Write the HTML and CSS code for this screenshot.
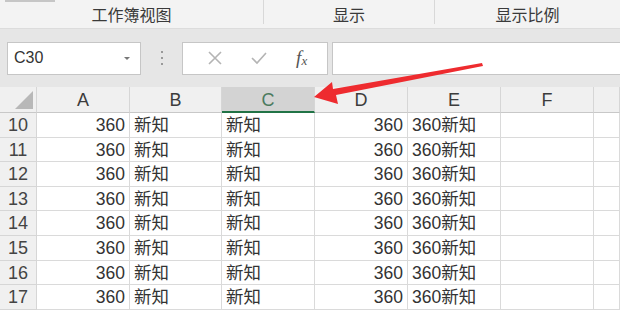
FILE: index.html
```html
<!DOCTYPE html>
<html lang="zh-CN">
<head>
  <meta charset="UTF-8">
  <title>Excel</title>
  <link rel="stylesheet" href="styles.css">
</head>
<body>
  <div class="ribbon">
    <div class="group group-view"><span class="stub"></span>工作簿视图</div>
    <div class="group group-show">显示</div>
    <div class="group group-zoom">显示比例</div>
  </div>

  <div class="formula-bar">
    <div class="name-box">
      <span>C30</span>
      <svg class="caret" width="8" height="5" viewBox="0 0 8 5"><path d="M1 1 L4 4 L7 1 Z" fill="#777"/></svg>
    </div>
    <div class="dots"><i></i><i></i><i></i></div>
    <div class="fx-buttons">
      <svg width="16" height="16" viewBox="0 0 16 16"><path d="M2 2 L14 14 M14 2 L2 14" stroke="#b4b4b4" stroke-width="1.6"/></svg>
      <svg width="18" height="16" viewBox="0 0 18 16"><path d="M2 8 L7 13 L16 3" stroke="#b4b4b4" stroke-width="1.6" fill="none"/></svg>
      <span class="fx">f<sub>x</sub></span>
    </div>
    <div class="formula-input"></div>
  </div>

  <div class="sheet" id="sheet">
    <div class="corner"><svg width="20" height="20" viewBox="0 0 20 20"><path d="M19 1 L19 19 L1 19 Z" fill="#b8b8b8"/></svg></div>
    <div class="col-head">A</div>
    <div class="col-head">B</div>
    <div class="col-head active">C</div>
    <div class="col-head">D</div>
    <div class="col-head">E</div>
    <div class="col-head">F</div>
    <div class="col-head"></div>
  </div>

  <svg class="arrow" width="620" height="313" viewBox="0 0 620 313">
    <path d="M314 97 L332 82 L333 89 L482 63 L483 66 L336 95 L338 104 Z" fill="#ee2b2f"/>
  </svg>

  <script>
    const sheet = document.getElementById('sheet')
    for (let r = 10; r <= 17; r++) {
      const cells = [
        ['row-head', r],
        ['cell num', '360'],
        ['cell', '新知'],
        ['cell', '新知'],
        ['cell num', '360'],
        ['cell', '360新知'],
        ['cell', ''],
        ['cell', '']
      ]
      cells.forEach(([cls, text]) => {
        const div = document.createElement('div')
        div.className = cls
        div.textContent = text
        sheet.appendChild(div)
      })
    }
  </script>
</body>
</html>
```

FILE: styles.css
```css
* {
  box-sizing: border-box;
}
body {
  margin: 0;
  width: 620px;
  height: 313px;
  overflow: hidden;
  font-family: 'Liberation Sans', 'Noto Sans CJK SC', sans-serif;
  color: #444;
  background: #fff;
  position: relative;
}
.ribbon {
  display: flex;
  height: 29px;
  background: #f3f3f3;
  border-bottom: 1px solid #dcdcdc;
}
.group {
  position: relative;
  font-size: 16px;
  line-height: 18px;
  text-align: center;
  padding-top: 7px;
  color: #3a3a3a;
}
.group-view {
  width: 264px;
  border-right: 1px solid #d8d8d8;
  margin-bottom: 4px;
}
.group-show {
  width: 171px;
  border-right: 1px solid #d8d8d8;
  margin-bottom: 4px;
}
.group-zoom {
  flex: 1;
}
.stub {
  position: absolute;
  left: 5px;
  top: 0;
  width: 50px;
  height: 2px;
  background: #c6c6c6;
}
.formula-bar {
  display: flex;
  align-items: center;
  height: 58px;
  padding: 0 0 0 7px;
  background: #e6e6e6;
}
.name-box {
  width: 134px;
  height: 33px;
  background: #fff;
  border: 1px solid #c6c6c6;
  display: flex;
  align-items: center;
  justify-content: space-between;
  padding: 0 9px 0 6px;
  font-size: 16px;
  color: #333;
}
.dots {
  width: 41px;
  display: flex;
  flex-direction: column;
  align-items: center;
  gap: 4px;
}
.dots i {
  width: 2px;
  height: 2px;
  background: #999;
}
.fx-buttons {
  width: 146px;
  height: 33px;
  background: #fff;
  border: 1px solid #c6c6c6;
  display: flex;
  align-items: center;
  justify-content: space-around;
  padding: 0 6px 0 10px;
}
.fx {
  font-family: 'Liberation Serif', serif;
  font-style: italic;
  font-size: 19px;
  color: #555;
}
.fx sub {
  font-size: 13px;
  vertical-align: -1px;
}
.formula-input {
  flex: 1;
  height: 33px;
  margin-left: 4px;
  background: #fff;
  border: 1px solid #c6c6c6;
  border-right: none;
}
.sheet {
  display: grid;
  grid-template-columns: 37px 93px 92px 93px 93px 93px 93px 1fr;
  grid-template-rows: 26px repeat(8, 24.6px);
}
.corner,
.col-head,
.row-head {
  background: #f0f0f0;
  border-right: 1px solid #d6d6d6;
  border-bottom: 1px solid #c8c8c8;
}
.corner {
  display: flex;
  align-items: flex-end;
  justify-content: flex-end;
  padding: 0 2px 2px 0;
}
.col-head {
  font-size: 18px;
  text-align: center;
  line-height: 26px;
  color: #3c3c3c;
}
.col-head.active {
  background: #d3d3d3;
  color: #4b7a5e;
  border-bottom: 2px solid #217346;
}
.row-head {
  font-size: 18px;
  text-align: center;
  line-height: 24px;
  border-bottom-color: #d6d6d6;
}
.cell {
  font-size: 17.5px;
  line-height: 24px;
  padding: 0 4px;
  border-right: 1px solid #dadada;
  border-bottom: 1px solid #dadada;
  white-space: nowrap;
  color: #333;
}
.cell.num {
  text-align: right;
}
.arrow {
  position: absolute;
  left: 0;
  top: 0;
  pointer-events: none;
}
```
